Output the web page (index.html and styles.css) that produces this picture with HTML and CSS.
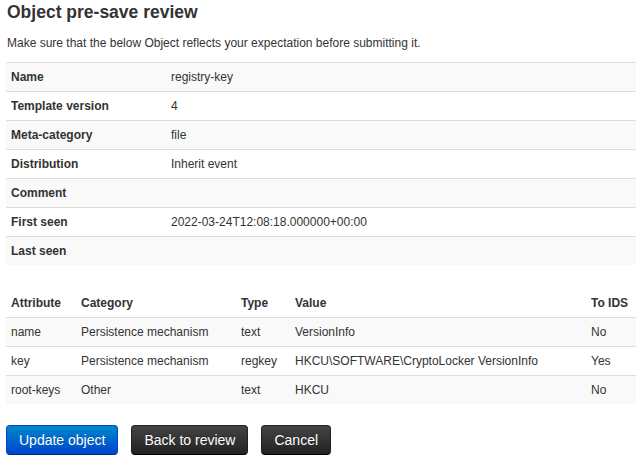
FILE: index.html
```html
<!DOCTYPE html>
<html>
<head>
<meta charset="utf-8">
<link rel="stylesheet" href="styles.css">
</head>
<body>
<div class="page">
  <h4 class="title">Object pre-save review</h4>
  <p class="intro">Make sure that the below Object reflects your expectation before submitting it.</p>
  <table class="table striped meta">
    <colgroup><col class="c-label"><col></colgroup>
    <tbody>
      <tr><th>Name</th><td>registry-key</td></tr>
      <tr><th>Template version</th><td>4</td></tr>
      <tr><th>Meta-category</th><td>file</td></tr>
      <tr><th>Distribution</th><td>Inherit event</td></tr>
      <tr><th>Comment</th><td></td></tr>
      <tr><th>First seen</th><td>2022-03-24T12:08:18.000000+00:00</td></tr>
      <tr><th>Last seen</th><td></td></tr>
    </tbody>
  </table>
  <table class="table striped attrs">
    <colgroup><col class="c-attr"><col class="c-cat"><col class="c-type"><col class="c-val"><col></colgroup>
    <thead>
      <tr><th>Attribute</th><th>Category</th><th>Type</th><th>Value</th><th>To IDS</th></tr>
    </thead>
    <tbody>
      <tr><td>name</td><td>Persistence mechanism</td><td>text</td><td>VersionInfo</td><td>No</td></tr>
      <tr><td>key</td><td>Persistence mechanism</td><td>regkey</td><td>HKCU\SOFTWARE\CryptoLocker VersionInfo</td><td>Yes</td></tr>
      <tr><td>root-keys</td><td>Other</td><td>text</td><td>HKCU</td><td>No</td></tr>
    </tbody>
  </table>
  <div class="actions">
    <button class="btn btn-primary">Update object</button>
    <button class="btn btn-inverse">Back to review</button>
    <button class="btn btn-inverse">Cancel</button>
  </div>
</div>
</body>
</html>
```
FILE: styles.css
```css
html, body {
  margin: 0;
  padding: 0;
  background: #fff;
}
body {
  font-family: "Liberation Sans", Arial, sans-serif;
  font-size: 12px;
  line-height: 20px;
  color: #333;
}
.page {
  padding: 0 0 0 6px;
}
.title {
  margin: 0;
  padding: 0 1px;
  font-size: 17.5px;
  line-height: 24px;
  font-weight: bold;
  color: #333;
}
.intro {
  margin: 9px 0 9px 1px;
}
.table {
  width: 100%;
  border-collapse: collapse;
  border-spacing: 0;
  margin-bottom: 20px;
}
.table th, .table td {
  padding: 4px 5px;
  line-height: 20px;
  text-align: left;
  vertical-align: top;
  border-top: 1px solid #ddd;
}
.table th {
  font-weight: bold;
}
.table thead th {
  border-top: 0;
  vertical-align: bottom;
}
.striped tbody tr:nth-child(odd) th,
.striped tbody tr:nth-child(odd) td {
  background: #f9f9f9;
}
.meta td {
  height: 20px;
}
.c-label { width: 160px; }
.c-attr { width: 70px; }
.c-cat { width: 160px; }
.c-type { width: 54px; }
.c-val { width: 296px; }
.attrs {
  margin-top: 24px;
}
.actions {
  display: flex;
  gap: 13px;
  margin-top: 21px;
}
.btn {
  font-family: "Liberation Sans", Arial, sans-serif;
  font-size: 14px;
  line-height: 20px;
  padding: 4px 12px;
  border-radius: 4px;
  color: #fff;
  cursor: pointer;
  text-shadow: 0 -1px 0 rgba(0,0,0,0.25);
}
.btn-primary {
  background: linear-gradient(to bottom, #0088cc, #0044cc);
  border: 1px solid #0044cc;
  border-bottom-color: #002a80;
}
.btn-inverse {
  background: linear-gradient(to bottom, #444444, #222222);
  border: 1px solid #222222;
  border-bottom-color: #000;
}
```
